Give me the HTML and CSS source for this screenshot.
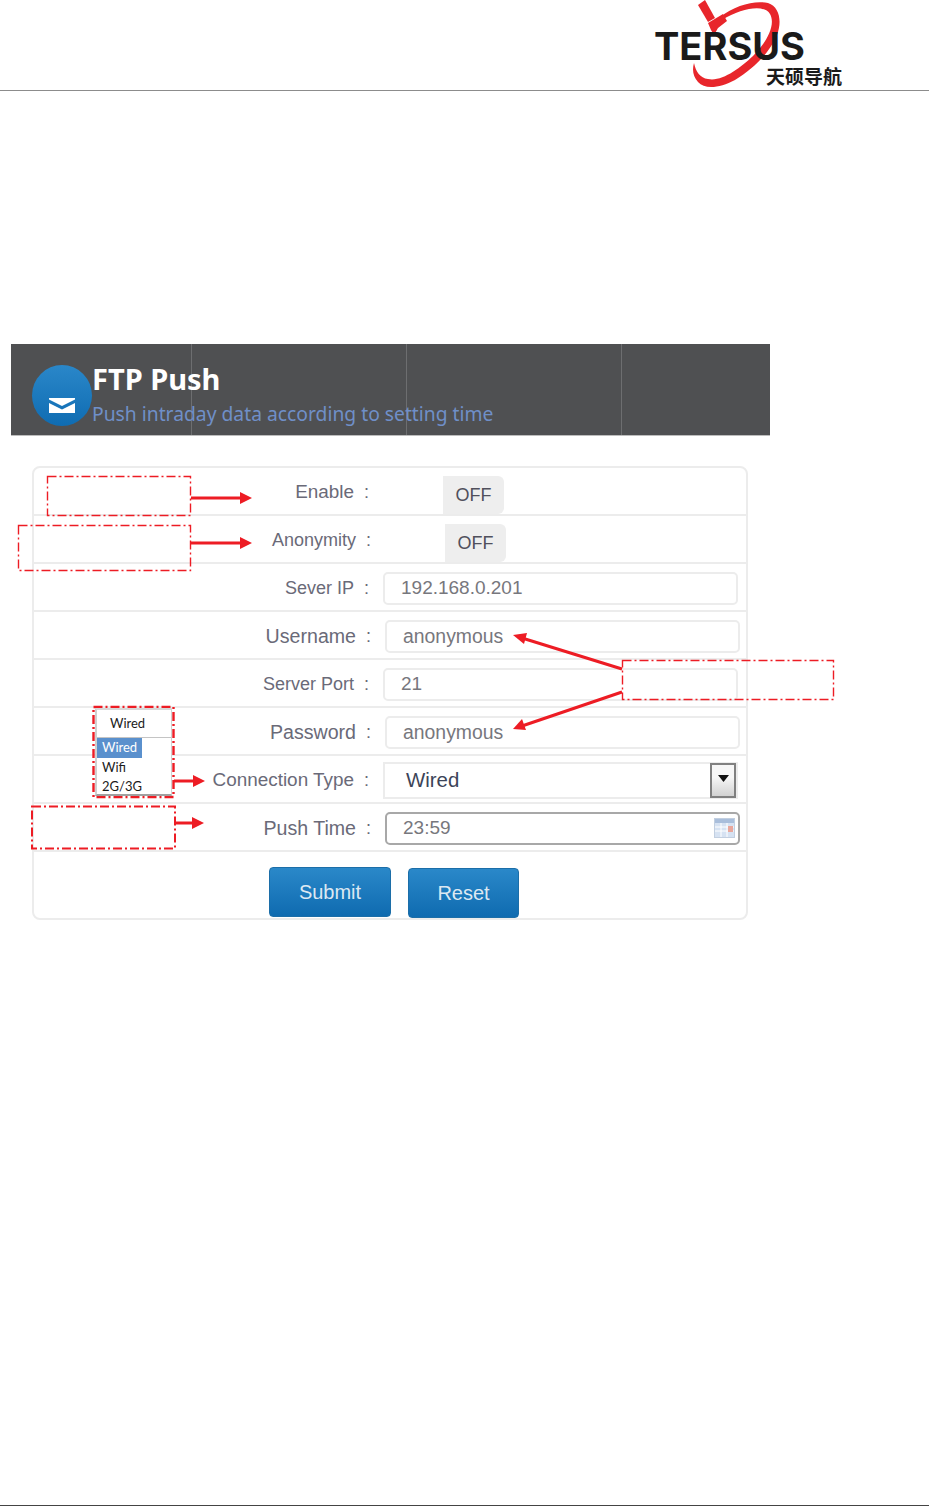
FILE: index.html
```html
<!DOCTYPE html>
<html lang="en">
<head>
<meta charset="utf-8">
<title>FTP Push</title>
<link rel="stylesheet" href="styles.css">
</head>
<body>
<div class="page">
  <header class="top">
    <div class="logo">
      <svg class="logo-art" width="200" height="90" viewBox="0 0 200 90">
        <path d="M48 5 L55 0 L65 18 L58 22 Z" fill="#e8262b"/>
        <path d="M58 23 L73 14 L77 21 L68 28 L64 35 L61 30 Z" fill="#e8262b"/>
        <path d="M70 17 C85 5 105 0 118 3 C130 7 132 22 127 35 C120 52 105 68 85 80 C70 88 55 90 48 82 C43 76 42 70 44 63 C46 72 50 78 58 79 C72 82 90 68 103 56 C117 42 126 25 120 14 C114 4 92 8 72 20 Z" fill="#e8262b"/>
      </svg>
      <span class="logo-word">TERSUS</span>
      <span class="logo-cn">天硕导航</span>
    </div>
  </header>

  <main class="content">
    <section class="banner">
      <div class="badge">
        <svg width="28" height="15" viewBox="0 0 28 15"><path d="M1 0 H27 V1.5 L14 8 L1 1.5 Z M1 5 L14 11.5 L27 5 V15 H1 Z" fill="#fff"/></svg>
      </div>
      <div class="banner-text">
        <h1 class="banner-title">FTP Push</h1>
        <p class="banner-sub">Push intraday data according to setting time</p>
      </div>
    </section>

    <form class="card">
      <div class="row"><label class="label label-mid">Enable</label><span class="colon">:</span><div class="ctl"><span class="toggle">OFF</span></div></div>
      <div class="row row-shift"><label class="label">Anonymity</label><span class="colon">:</span><div class="ctl"><span class="toggle">OFF</span></div></div>
      <div class="row"><label class="label">Sever IP</label><span class="colon">:</span><div class="ctl"><span class="input">192.168.0.201</span></div></div>
      <div class="row row-shift"><label class="label label-wide">Username</label><span class="colon">:</span><div class="ctl"><span class="input input-wide">anonymous</span></div></div>
      <div class="row"><label class="label">Server Port</label><span class="colon">:</span><div class="ctl"><span class="input">21</span></div></div>
      <div class="row row-shift"><label class="label label-wide">Password</label><span class="colon">:</span><div class="ctl"><span class="input input-wide">anonymous</span></div></div>
      <div class="row"><label class="label label-mid">Connection Type</label><span class="colon">:</span><div class="ctl"><span class="input select"><span class="select-val">Wired</span><span class="select-btn"><svg width="11" height="7" viewBox="0 0 11 7"><path d="M0 0 H11 L5.5 7 Z" fill="#111"/></svg></span></span></div></div>
      <div class="row row-shift"><label class="label label-wide">Push Time</label><span class="colon">:</span><div class="ctl"><span class="input time">23:59<svg class="cal" width="21" height="20" viewBox="0 0 21 20"><rect x="0.5" y="0.5" width="20" height="19" fill="#d6e2f2" stroke="#c2cfe0"/><rect x="1" y="1" width="19" height="4" fill="#a9bedb"/><path d="M1 9 H20 M1 13 H20 M7 5 V19 M13 5 V19" stroke="#fff" stroke-width="1"/><rect x="14" y="8" width="5" height="6" fill="#e9a79c"/></svg></span></div></div>
      <div class="actions">
        <button class="btn btn-a" type="button">Submit</button>
        <button class="btn btn-b" type="button">Reset</button>
      </div>
    </form>
  </main>

  <svg class="marks" width="929" height="1506" viewBox="0 0 929 1506">
    <g fill="none" stroke="#ed1c24" stroke-width="1.4" stroke-dasharray="9 3 2 3">
      <rect x="47.5" y="476.5" width="143" height="39"/>
      <rect x="18.5" y="525.5" width="172" height="45"/>
      <rect x="622.5" y="660.5" width="211" height="39"/>
      <rect x="93.5" y="707" width="80" height="90" stroke-width="2.4"/>
      <rect x="32" y="806.5" width="143" height="42" stroke-width="2"/>
    </g>
    <g stroke="#ed1c24" stroke-width="3" fill="none">
      <path d="M191 498 H242"/>
      <path d="M191 543 H242"/>
      <path d="M174 781 H195"/>
      <path d="M175 823 H194"/>
      <path d="M622 669 L522 638"/>
      <path d="M622 692 L522 726"/>
    </g>
    <g fill="#ed1c24">
      <path d="M240 492 L252 498 L240 504 Z"/>
      <path d="M240 537 L252 543 L240 549 Z"/>
      <path d="M193 775 L205 781 L193 787 Z"/>
      <path d="M192 817 L204 823 L192 829 Z"/>
      <path d="M513 635 L527 633 L524 644 Z"/>
      <path d="M513 729 L522 719 L526 730 Z"/>
    </g>
  </svg>

  <div class="popup">
    <div class="popup-head">Wired</div>
    <ul class="popup-list">
      <li class="popup-item popup-on">Wired</li>
      <li class="popup-item">Wifi</li>
      <li class="popup-item">2G/3G</li>
    </ul>
  </div>

  <footer class="bottom"></footer>
</div>
</body>
</html>
```

FILE: styles.css
```css
* { box-sizing: border-box; }
html, body { margin: 0; padding: 0; background: #fff; }
.page {
  position: relative;
  width: 929px;
  height: 1506px;
  display: flex;
  flex-direction: column;
  overflow: hidden;
  font-family: "Liberation Sans", Arial, sans-serif;
}
.top {
  height: 91px;
  flex: none;
  border-bottom: 1px solid #8c8c8c;
  padding-left: 650px;
}
.logo { position: relative; width: 200px; height: 90px; }
.logo-art { position: absolute; left: 0; top: 0; }
.logo-word {
  position: absolute;
  left: 4px;
  top: 31px;
  font: 700 38px/30px Inter, "Liberation Sans", sans-serif;
  letter-spacing: 0;
  color: #1a1a1a;
}
.logo-cn {
  position: absolute;
  left: 116px;
  top: 65px;
  font: 700 19px/22px "Noto Sans CJK SC", sans-serif;
  color: #1a1a1a;
}
.content { flex: 1; padding: 253px 0 0 11px; }
.banner {
  width: 759px;
  height: 92px;
  display: flex;
  align-items: flex-start;
  padding: 21px 0 0 21px;
  background-color: #4f5052;
  background-image:
    linear-gradient(#6d6e70, #6d6e70),
    linear-gradient(#6d6e70, #6d6e70),
    linear-gradient(#6d6e70, #6d6e70);
  background-size: 1px 100%;
  background-repeat: no-repeat;
  background-position: 180px 0, 395px 0, 610px 0;
  border-bottom: 1px solid #bdbdbd;
}
.badge {
  width: 60px;
  height: 61px;
  flex: none;
  border-radius: 50%;
  background: linear-gradient(#2a87c9, #0f6cb2);
  display: flex;
  align-items: flex-end;
  justify-content: center;
  padding-bottom: 13px;
}
.banner-text { margin-top: -3px; }
.banner-title {
  margin: 0;
  font: 700 29px/34px "Noto Sans", sans-serif;
  color: #fff;
}
.banner-sub {
  margin: 5px 0 0;
  font: 400 19.3px/26px "Noto Sans", sans-serif;
  color: #6f8fc8;
}
.card {
  width: 716px;
  height: 454px;
  margin: 30px 0 0 21px;
  border: 2px solid #ececec;
  border-radius: 8px;
  display: flex;
  flex-direction: column;
}
.row {
  height: 48px;
  flex: none;
  display: flex;
  align-items: center;
  padding-top: 2px;
  border-bottom: 2px solid #ececec;
  color: #6a6a78;
  font-size: 18px;
}
.label { width: 320px; text-align: right; }
.label-mid { font-size: 18.9px; }
.label-wide { font-size: 19.6px; }
.colon { width: 14px; margin-left: 10px; }
.ctl { flex: 1; display: flex; flex-direction: column; padding: 0 8px 0 5px; }
.row-shift .label { width: 322px; }
.row-shift .ctl { padding: 0 6px 0 5px; }
.toggle {
  display: flex;
  width: 61px;
  height: 38px;
  margin: 6px 0 0 60px;
  align-items: center;
  justify-content: center;
  background: #eeeeee;
  border-radius: 0 6px 6px 0;
  color: #50505c;
}
.input {
  display: flex;
  align-items: center;
  height: 33px;
  padding-left: 16px;
  border: 2px solid #ececec;
  border-radius: 5px;
  color: #77777d;
  font-size: 19px;
}
.input-wide { font-size: 19.4px; }
.select {
  height: 37px;
  padding-left: 21px;
  justify-content: space-between;
  border-radius: 0;
  color: #3c4458;
  font-size: 20.4px;
}
.select-btn {
  width: 26px;
  height: 35px;
  display: flex;
  align-items: center;
  justify-content: center;
  padding-bottom: 3px;
  border: 2px solid #808080;
  background: linear-gradient(#f6f6f6 40%, #d2d2d2);
}
.time {
  justify-content: space-between;
  border-color: #a8a8a8;
  padding-right: 3px;
}
.cal { flex: none; }
.actions {
  flex: 1;
  display: flex;
  align-items: flex-start;
  gap: 17px;
  padding: 15px 0 0 235px;
}
.btn {
  height: 50px;
  border: 1px solid #1c6ea8;
  border-radius: 4px;
  background: linear-gradient(#2a88c9, #0f6bb0);
  color: #dce8f2;
  font: 400 20px "Liberation Sans", Arial, sans-serif;
}
.btn-a { width: 122px; }
.btn-b { width: 111px; margin-top: 1px; }
.marks { position: absolute; left: 0; top: 0; pointer-events: none; }
.popup {
  position: absolute;
  left: 95px;
  top: 708px;
  width: 77px;
  height: 88px;
  background: #fff;
  border-right: 1px solid #d0d0d0;
  border-bottom: 2px solid #a0a0a0;
  border-left: 2px solid #d0d0d0;
  border-top: 2px solid #d8d8d8;
  font: 400 13px Lato, "Noto Sans", sans-serif;
  color: #1b1b1b;
}
.popup-head {
  height: 28px;
  padding-left: 13px;
  line-height: 27px;
  border-bottom: 1px solid #c4c4c4;
}
.popup-list { list-style: none; margin: 0; padding: 0; }
.popup-item { height: 19.5px; line-height: 19.5px; padding-left: 5px; }
.popup-on { width: 45px; background: #5a90cd; color: #fff; }
.bottom {
  position: absolute;
  left: 0;
  right: 0;
  bottom: 0;
  height: 1px;
  background: #444;
}
```
